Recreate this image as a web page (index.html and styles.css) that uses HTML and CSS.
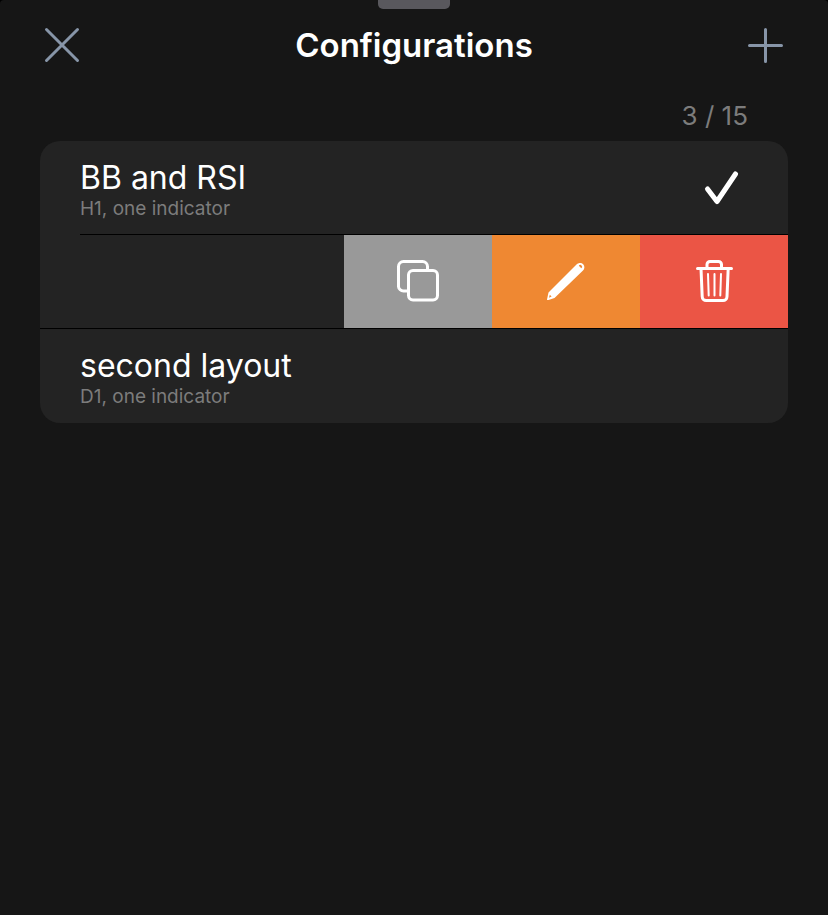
FILE: index.html
```html
<!DOCTYPE html>
<html lang="en">
<head>
    <meta charset="UTF-8">
    <meta name="viewport" content="width=device-width, initial-scale=1.0">
    <title>Configurations</title>
    <link rel="stylesheet" href="styles.css">
</head>
<body>
<div class="sheet">
    <div class="handle"></div>
    <header class="header">
        <button class="icon-btn" type="button" aria-label="Close">
            <svg width="44" height="44" viewBox="0 1 44 44"><path d="M6.5 7.5 37.5 38.5M37.5 7.5 6.5 38.5"/></svg>
        </button>
        <h1>Configurations</h1>
        <button class="icon-btn" type="button" aria-label="Add configuration">
            <svg width="44" height="44" viewBox="0 1 44 44"><path d="M5.5 23.5H37.5M21.5 7.500V39.500"/></svg>
        </button>
    </header>

    <main class="content">
        <p class="counter">3 / 15</p>
        <ul class="list">
            <li class="row">
                <button class="item" type="button">
                    <span class="text">
                        <span class="name">BB and RSI</span>
                        <span class="info">H1, one indicator</span>
                    </span>
                    <svg class="check" width="40" height="40" viewBox="0 0 40 40"><path d="M6.5 21 16 33.5 34.5 6"/></svg>
                </button>
            </li>
            <!-- swiped row with its actions open -->
            <li class="row swiped">
                <button class="action copy" type="button" aria-label="Duplicate">
                    <svg width="48" height="48" viewBox="0 2 48 48">
                        <rect x="14.5" y="14.5" width="29" height="29.5" rx="4.5"/>
                        <path d="M14 35H9.5A5 5 0 0 1 4.500 30.500V10.500A5 5 0 0 1 9.500 5.500H28.500A5 5 0 0 1 33.500 10.500V14"/>
                    </svg>
                </button>
                <button class="action edit" type="button" aria-label="Edit">
                    <svg width="48" height="48" viewBox="0 2 48 48">
                        <path class="solid" fill-rule="evenodd" d="M5 43.500 6.500 36.500 34.500 8.500C36.500 6.500 39.500 6.500 41.200 8.200S42.700 12.800 41 14.600L12.500 42 6.500 43.900C5.500 44.200 4.800 44 5 43.500ZM7.800 38.800 7 41.700 9.600 40.600ZM36.800 9.800 39.300 12.300A1.800 1.800 0 1 0 36.800 9.800Z"/>
                    </svg>
                </button>
                <button class="action delete" type="button" aria-label="Delete">
                    <svg width="48" height="48" viewBox="0 2 48 48">
                        <path d="M7.500 12.500H41.500M17 12V8.500A3 3 0 0 1 20 5.500H28.500A3 3 0 0 1 31.500 8.500V12M11 12.500 12.200 40.500A4 4 0 0 0 16.200 44.500H33A4 4 0 0 0 37 40.500L38.200 12.500"/>
                        <path class="thin" d="M18 18 18.700 39.500M24.500 18V39.500M31 18 30.300 39.500"/>
                    </svg>
                </button>
            </li>
            <li class="row">
                <button class="item" type="button">
                    <span class="text">
                        <span class="name">second layout</span>
                        <span class="info">D1, one indicator</span>
                    </span>
                </button>
            </li>
        </ul>
    </main>
</div>
</body>
</html>
```
FILE: styles.css
```css
* {
    box-sizing: border-box;
}
body {
    margin: 0;
    background-color: #000;
    color: #fff;
    font-family: Inter, "Liberation Sans", sans-serif;
}
button {
    margin: 0;
    padding: 0;
    border: none;
    background: none;
    color: inherit;
    font-family: inherit;
    cursor: pointer;
}
svg {
    display: block;
    fill: none;
    stroke: #fff;
    stroke-linecap: round;
    stroke-linejoin: round;
}
.sheet {
    min-height: 100vh;
    background-color: #161616;
    border-radius: 4px 4px 0 0;
}
.handle {
    width: 72px;
    height: 9px;
    margin: 0 auto;
    background-color: #59585d;
    border-radius: 0 0 5px 5px;
}
.header {
    display: flex;
    justify-content: space-between;
    align-items: center;
    padding: 13px 40px 0;
}
.header h1 {
    margin: 0;
    font-size: 33px;
    line-height: 46px;
    font-weight: 600;
}
.icon-btn svg {
    stroke: #8795a8;
    stroke-width: 3;
}
.content {
    padding: 32px 40px 0;
}
.counter {
    margin: 0 40px 9px;
    font-size: 26px;
    line-height: 32px;
    text-align: right;
    color: #7c7c7c;
}
.list {
    margin: 0;
    padding: 0 0 1px;
    list-style: none;
    background-color: #232323;
    border-radius: 20px;
    overflow: hidden;
}
.row + .row {
    border-top: 1px solid #000;
}
.row + .swiped {
    border-image: linear-gradient(to right, #232323 41px, #000 41px) 1;
}
.item {
    display: flex;
    justify-content: space-between;
    align-items: center;
    width: 100%;
    min-height: 93px;
    padding: 0 47px 0 40px;
    text-align: left;
}
.text {
    display: flex;
    flex-direction: column;
    padding-top: 2px;
}
.name {
    font-size: 32px;
    line-height: 40px;
}
.info {
    font-size: 19px;
    line-height: 22px;
    color: #7c7c7c;
}
.check {
    stroke-width: 5;
}
.swiped {
    display: flex;
    justify-content: flex-end;
}
.action {
    display: flex;
    justify-content: center;
    align-items: center;
    width: 148px;
    height: 93px;
}
.action svg {
    stroke-width: 3;
}
.action .thin {
    stroke-width: 2;
}
.action .solid {
    fill: #fff;
    stroke: none;
}
.copy {
    background-color: #999;
}
.edit {
    background-color: #ef8832;
}
.delete {
    background-color: #eb5545;
}
```
